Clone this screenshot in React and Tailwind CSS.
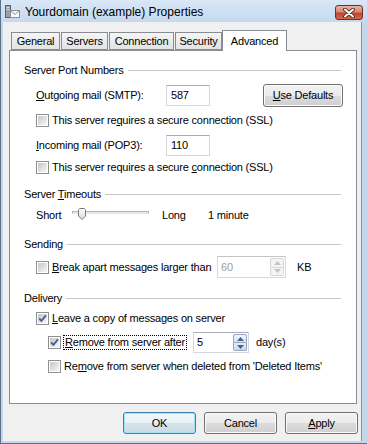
import React from 'react';

const CheckBox = ({ checked }) => (
  <svg width="13" height="13" viewBox="0 0 13 13" className="shrink-0">
    <defs>
      <linearGradient id="cbFill" x1="0" y1="0" x2="1" y2="1">
        <stop offset="0" stopColor="#c3c7cc" />
        <stop offset="1" stopColor="#f7f7f7" />
      </linearGradient>
    </defs>
    <rect x="0.5" y="0.5" width="12" height="12" fill="#fff" stroke="#8e8f8f" />
    <rect x="2" y="2" width="9" height="9" fill="url(#cbFill)" />
    {checked && <path d="M3.1 6.3 L5.4 8.9 L9.9 3.3" fill="none" stroke="#4a5f97" strokeWidth="1.9" />}
  </svg>
);

const Arrow = ({ up, color }) => (
  <svg width="7" height="4" viewBox="0 0 7 4">
    <path d={up ? 'M0 4 L3.5 0 L7 4 Z' : 'M0 0 L3.5 4 L7 0 Z'} fill={color} />
  </svg>
);

const Spin = ({ value, className, disabled }) => (
  <div
    className={`flex border bg-white ${className} ${
      disabled ? 'border-[#d9d9d9] border-t-[#c4c4c4]' : 'border-[#d5d9df] border-t-[#abadb3]'
    }`}
  >
    <div className={`flex-1 flex items-center pl-[3px] ${disabled ? 'text-[#a0a0a0]' : 'text-black'}`}>{value}</div>
    <div className="w-[16px] flex flex-col p-[1px]">
      <div
        className={`flex-1 flex items-center justify-center rounded-t-[2px] border ${
          disabled ? 'border-[#d6d6d6] bg-[#f4f4f4]' : 'border-[#93a7c2] bg-[linear-gradient(180deg,#f2f6fb,#d6e3f1)]'
        }`}
      >
        <Arrow up color={disabled ? '#c4c4c4' : '#4d6185'} />
      </div>
      <div
        className={`flex-1 flex items-center justify-center rounded-b-[2px] border border-t-0 ${
          disabled ? 'border-[#d6d6d6] bg-[#f4f4f4]' : 'border-[#93a7c2] bg-[linear-gradient(180deg,#e4edf7,#c9dbee)]'
        }`}
      >
        <Arrow color={disabled ? '#c4c4c4' : '#4d6185'} />
      </div>
    </div>
  </div>
);

const TextBox = ({ value }) => (
  <div className="w-[44px] h-[21px] flex items-center pl-[4px] bg-white border border-[#d5d9df] border-t-[#abadb3]">
    {value}
  </div>
);

const GroupHeader = ({ children, className }) => (
  <div className={`flex items-center h-[16px] ${className}`}>
    <span className="whitespace-nowrap">{children}</span>
    <div className="flex-1 h-px bg-[#c6c6c6] ml-[4px]" />
  </div>
);

const Button = ({ children, className, focused }) => (
  <div
    className={`flex items-center justify-center rounded-[3px] border ${className} ${
      focused
        ? 'border-[#3c7fb1] shadow-[inset_0_0_0_1px_#a6e1f8] bg-[linear-gradient(180deg,#f2f8fb_0%,#e8f1f5_50%,#d7e5ec_50%,#c9dbe4_100%)]'
        : 'border-[#707070] shadow-[inset_0_0_0_1px_#fbfbfb] bg-[linear-gradient(180deg,#f2f2f2_0%,#ebebeb_50%,#dddddd_50%,#cfcfcf_100%)]'
    }`}
  >
    {children}
  </div>
);

const Tab = ({ children, className, selected }) => (
  <div
    className={`flex items-center justify-center border border-[#898c95] ${className} ${
      selected
        ? 'h-[21px] -mb-px border-b-0 bg-white relative z-10'
        : 'h-[18px] bg-[linear-gradient(180deg,#f5f5f5,#e3e3e3)]'
    }`}
  >
    {children}
  </div>
);

const AppIcon = () => (
  <svg width="17" height="16" viewBox="0 0 17 16">
    <rect x="1.5" y="1.5" width="5" height="12" fill="#9aa0a6" stroke="#5c6268" />
    <rect x="2.5" y="3" width="3" height="1" fill="#d8dcdf" />
    <rect x="2.5" y="5" width="3" height="1" fill="#d8dcdf" />
    <rect x="6.5" y="6.5" width="9" height="7" fill="#fbfbfb" stroke="#8b9096" />
    <path d="M6.5 6.5 L11 10.5 L15.5 6.5" fill="none" stroke="#8b9096" />
  </svg>
);

export default function App() {
  return (
    <div className="w-[367px] h-[444px] flex flex-col overflow-hidden bg-[#c3d7ed] border-l border-b border-[#5b6f85] font-['Liberation_Sans',Arial,sans-serif] text-[11px] tracking-[-0.2px] text-black leading-none">
      {/* title bar */}
      <div className="h-[22px] flex items-start bg-[linear-gradient(180deg,#d9e7f6_0%,#c5d9ef_100%)]">
        <div className="mt-[4px] ml-[3px]">
          <AppIcon />
        </div>
        <div className="ml-[4px] mt-[6px] text-[12px] tracking-normal">Yourdomain (example) Properties</div>
        <div className="ml-auto mr-[4px] mt-[5px] w-[28px] h-[15px] rounded-[3px] border border-[#6b3128] flex items-center justify-center bg-[linear-gradient(180deg,#eab1a5_0%,#d98472_45%,#c4452e_55%,#d06a4f_100%)]">
          <svg width="12" height="10" viewBox="0 0 12 10">
            <path d="M2 1.5 L10 8.5 M10 1.5 L2 8.5" stroke="#3d1a14" strokeWidth="3.6" strokeLinecap="round" />
            <path d="M2 1.5 L10 8.5 M10 1.5 L2 8.5" stroke="#fff" strokeWidth="2" strokeLinecap="round" />
          </svg>
        </div>
      </div>

      {/* body */}
      <div className="flex-1 flex pl-[2px] pr-[5px] pb-[2px]">
        <div className="flex-1 flex flex-col bg-[#f0f0f0] border-r border-[#7d91a7]">
          {/* tabs */}
          <div className="mt-[8px] ml-[8px] h-[20px] flex items-end">
            <Tab className="w-[49px]">General</Tab>
            <Tab className="w-[47px] ml-px">Servers</Tab>
            <Tab className="w-[65px] ml-px">Connection</Tab>
            <Tab className="w-[47px] ml-px">Security</Tab>
            <Tab className="w-[65px]" selected>
              Advanced
            </Tab>
          </div>

          {/* panel */}
          <div className="ml-[6px] w-[348px] h-[354px] bg-white border border-[#898c95] flex flex-col pl-[14px] pr-[15px]">
            <GroupHeader className="mt-[11px]">Server Port Numbers</GroupHeader>

            <div className="mt-[6px] h-[23px] flex items-center pl-[12px]">
              <div className="w-[130px]">
                <span className="underline">O</span>utgoing mail (SMTP):
              </div>
              <TextBox value="587" />
              <Button className="ml-[53px] w-[80px] h-[23px] -mr-[2px]">
                <span>
                  <span className="underline">U</span>se Defaults
                </span>
              </Button>
            </div>

            <div className="mt-[5px] h-[16px] flex items-center gap-[3px] pl-[12px]">
              <CheckBox />
              <span>
                This server re<span className="underline">q</span>uires a secure connection (SSL)
              </span>
            </div>

            <div className="mt-[7px] h-[21px] flex items-center pl-[12px]">
              <div className="w-[130px]">
                <span className="underline">I</span>ncoming mail (POP3):
              </div>
              <TextBox value="110" />
            </div>

            <div className="mt-[3px] h-[16px] flex items-center gap-[3px] pl-[12px]">
              <CheckBox />
              <span>
                This server requires a secure <span className="underline">c</span>onnection (SSL)
              </span>
            </div>

            <GroupHeader className="mt-[11px]">
              Server <span className="underline">T</span>imeouts
            </GroupHeader>

            <div className="mt-[5px] h-[16px] flex items-center pl-[12px]">
              <div className="w-[36px]">Short</div>
              <div className="w-[77px] h-[16px] relative">
                <div className="absolute left-0 right-0 top-[4px] h-[3px] border border-[#b4b4b4] border-b-[#e6e6e6] bg-[#e9e9e9]" />
                <svg className="absolute left-[6px] top-[1px]" width="8" height="12" viewBox="0 0 8 12">
                  <defs>
                    <linearGradient id="thumbFill" x1="0" y1="0" x2="0" y2="1">
                      <stop offset="0" stopColor="#fbfbfb" />
                      <stop offset="1" stopColor="#dcdcdc" />
                    </linearGradient>
                  </defs>
                  <path d="M1.5 0.5 H6.5 L7.5 1.5 V8 L4 11.5 L0.5 8 V1.5 Z" fill="url(#thumbFill)" stroke="#7b7b7b" />
                </svg>
              </div>
              <div className="ml-[13px] w-[46px]">Long</div>
              <div>1 minute</div>
            </div>

            <GroupHeader className="mt-[13px]">Sending</GroupHeader>

            <div className="mt-[4px] h-[22px] flex items-center pl-[12px]">
              <CheckBox />
              <span className="ml-[3px] w-[165px]">
                <span className="underline">B</span>reak apart messages larger than
              </span>
              <Spin value="60" className="w-[69px] h-[22px]" disabled />
              <span className="ml-[11px]">KB</span>
            </div>

            <GroupHeader className="mt-[12px]">Delivery</GroupHeader>

            <div className="mt-[4px] h-[16px] flex items-center gap-[3px] pl-[12px]">
              <CheckBox checked />
              <span>
                <span className="underline">L</span>eave a copy of messages on server
              </span>
            </div>

            <div className="mt-[6px] h-[21px] flex items-center pl-[24px]">
              <CheckBox checked />
              <div className="ml-[2px] w-[130px]">
                <span className="inline-block border border-dotted border-black px-px py-px">
                  <span className="underline">R</span>emove from server after
                </span>
              </div>
              <Spin value="5" className="w-[56px] h-[21px]" />
              <span className="ml-[7px]">day(s)</span>
            </div>

            <div className="mt-[5px] h-[16px] flex items-center gap-[3px] pl-[24px]">
              <CheckBox />
              <span>
                Re<span className="underline">m</span>ove from server when deleted from 'Deleted Items'
              </span>
            </div>
          </div>

          {/* buttons */}
          <div className="mt-[8px] flex justify-end gap-[8px] pr-[3px]">
            <Button className="w-[73px] h-[22px]" focused>
              OK
            </Button>
            <Button className="w-[73px] h-[22px]">Cancel</Button>
            <Button className="w-[73px] h-[22px]">
              <span>
                <span className="underline">A</span>pply
              </span>
            </Button>
          </div>
        </div>
      </div>
    </div>
  );
}
